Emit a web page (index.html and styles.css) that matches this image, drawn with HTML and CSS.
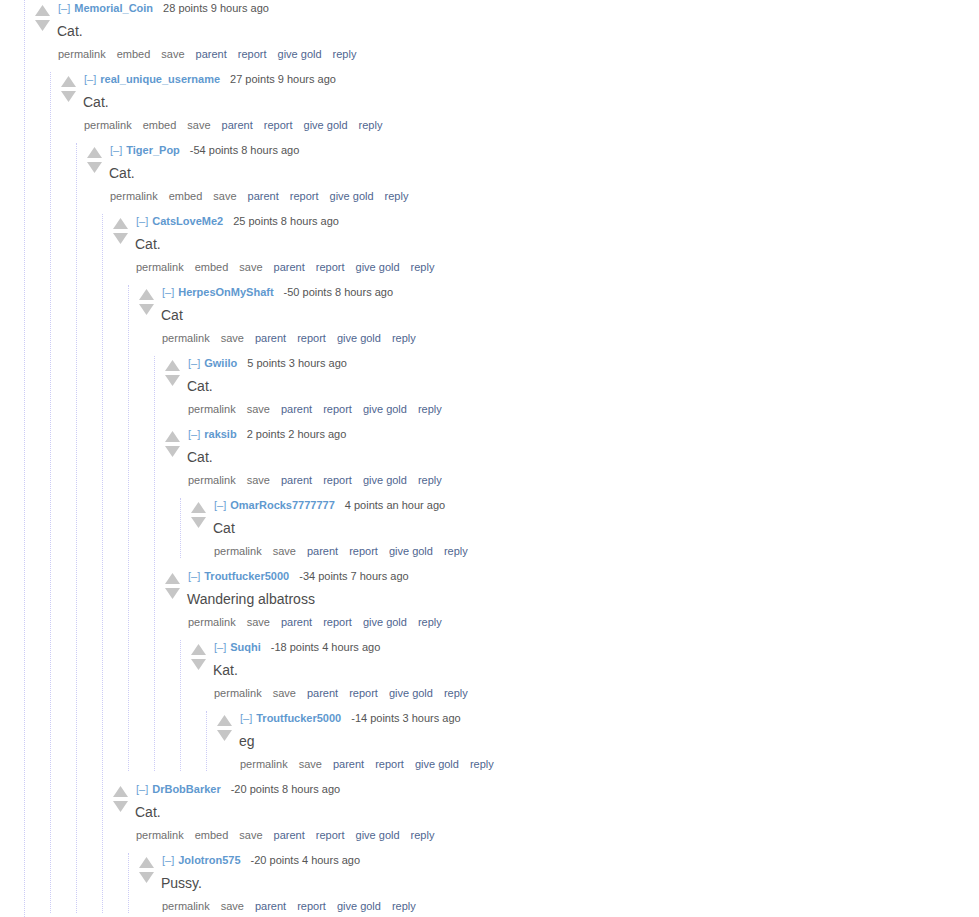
FILE: index.html
```html
<!DOCTYPE html>
<html lang="en">
<head>
<meta charset="utf-8">
<title>comments</title>
<link rel="stylesheet" href="styles.css">
</head>
<body>
<div class="thread">

  <div class="comment">
    <div class="row">
      <div class="midcol">
        <svg class="arrow up" width="15" height="11" viewBox="0 0 15 11"><polygon points="7.5,0 15,11 0,11"/></svg>
        <svg class="arrow down" width="15" height="11" viewBox="0 0 15 11"><polygon points="0,0 15,0 7.5,11"/></svg>
      </div>
      <div class="entry">
        <p class="tagline"><a class="expand">[–]</a><a class="author">Memorial_Coin</a><span class="score">28 points 9 hours ago</span></p>
        <div class="md">Cat.</div>
        <ul class="buttons"><li>permalink</li><li>embed</li><li>save</li><li class="blue">parent</li><li class="blue">report</li><li class="blue">give gold</li><li class="blue">reply</li></ul>
      </div>
    </div>
    <div class="children">

      <div class="comment">
        <div class="row">
          <div class="midcol">
            <svg class="arrow up" width="15" height="11" viewBox="0 0 15 11"><polygon points="7.5,0 15,11 0,11"/></svg>
            <svg class="arrow down" width="15" height="11" viewBox="0 0 15 11"><polygon points="0,0 15,0 7.5,11"/></svg>
          </div>
          <div class="entry">
            <p class="tagline"><a class="expand">[–]</a><a class="author">real_unique_username</a><span class="score">27 points 9 hours ago</span></p>
            <div class="md">Cat.</div>
            <ul class="buttons"><li>permalink</li><li>embed</li><li>save</li><li class="blue">parent</li><li class="blue">report</li><li class="blue">give gold</li><li class="blue">reply</li></ul>
          </div>
        </div>
        <div class="children">

          <div class="comment">
            <div class="row">
              <div class="midcol">
                <svg class="arrow up" width="15" height="11" viewBox="0 0 15 11"><polygon points="7.5,0 15,11 0,11"/></svg>
                <svg class="arrow down" width="15" height="11" viewBox="0 0 15 11"><polygon points="0,0 15,0 7.5,11"/></svg>
              </div>
              <div class="entry">
                <p class="tagline"><a class="expand">[–]</a><a class="author">Tiger_Pop</a><span class="score">-54 points 8 hours ago</span></p>
                <div class="md">Cat.</div>
                <ul class="buttons"><li>permalink</li><li>embed</li><li>save</li><li class="blue">parent</li><li class="blue">report</li><li class="blue">give gold</li><li class="blue">reply</li></ul>
              </div>
            </div>
            <div class="children">

              <div class="comment">
                <div class="row">
                  <div class="midcol">
                    <svg class="arrow up" width="15" height="11" viewBox="0 0 15 11"><polygon points="7.5,0 15,11 0,11"/></svg>
                    <svg class="arrow down" width="15" height="11" viewBox="0 0 15 11"><polygon points="0,0 15,0 7.5,11"/></svg>
                  </div>
                  <div class="entry">
                    <p class="tagline"><a class="expand">[–]</a><a class="author">CatsLoveMe2</a><span class="score">25 points 8 hours ago</span></p>
                    <div class="md">Cat.</div>
                    <ul class="buttons"><li>permalink</li><li>embed</li><li>save</li><li class="blue">parent</li><li class="blue">report</li><li class="blue">give gold</li><li class="blue">reply</li></ul>
                  </div>
                </div>
                <div class="children">

                  <div class="comment">
                    <div class="row">
                      <div class="midcol">
                        <svg class="arrow up" width="15" height="11" viewBox="0 0 15 11"><polygon points="7.5,0 15,11 0,11"/></svg>
                        <svg class="arrow down" width="15" height="11" viewBox="0 0 15 11"><polygon points="0,0 15,0 7.5,11"/></svg>
                      </div>
                      <div class="entry">
                        <p class="tagline"><a class="expand">[–]</a><a class="author">HerpesOnMyShaft</a><span class="score">-50 points 8 hours ago</span></p>
                        <div class="md">Cat</div>
                        <ul class="buttons"><li>permalink</li><li>save</li><li class="blue">parent</li><li class="blue">report</li><li class="blue">give gold</li><li class="blue">reply</li></ul>
                      </div>
                    </div>
                    <div class="children">

                      <div class="comment">
                        <div class="row">
                          <div class="midcol">
                            <svg class="arrow up" width="15" height="11" viewBox="0 0 15 11"><polygon points="7.5,0 15,11 0,11"/></svg>
                            <svg class="arrow down" width="15" height="11" viewBox="0 0 15 11"><polygon points="0,0 15,0 7.5,11"/></svg>
                          </div>
                          <div class="entry">
                            <p class="tagline"><a class="expand">[–]</a><a class="author">Gwiilo</a><span class="score">5 points 3 hours ago</span></p>
                            <div class="md">Cat.</div>
                            <ul class="buttons"><li>permalink</li><li>save</li><li class="blue">parent</li><li class="blue">report</li><li class="blue">give gold</li><li class="blue">reply</li></ul>
                          </div>
                        </div>
                      </div>

                      <div class="comment">
                        <div class="row">
                          <div class="midcol">
                            <svg class="arrow up" width="15" height="11" viewBox="0 0 15 11"><polygon points="7.5,0 15,11 0,11"/></svg>
                            <svg class="arrow down" width="15" height="11" viewBox="0 0 15 11"><polygon points="0,0 15,0 7.5,11"/></svg>
                          </div>
                          <div class="entry">
                            <p class="tagline"><a class="expand">[–]</a><a class="author">raksib</a><span class="score">2 points 2 hours ago</span></p>
                            <div class="md">Cat.</div>
                            <ul class="buttons"><li>permalink</li><li>save</li><li class="blue">parent</li><li class="blue">report</li><li class="blue">give gold</li><li class="blue">reply</li></ul>
                          </div>
                        </div>
                        <div class="children">
                          <div class="comment">
                            <div class="row">
                              <div class="midcol">
                                <svg class="arrow up" width="15" height="11" viewBox="0 0 15 11"><polygon points="7.5,0 15,11 0,11"/></svg>
                                <svg class="arrow down" width="15" height="11" viewBox="0 0 15 11"><polygon points="0,0 15,0 7.5,11"/></svg>
                              </div>
                              <div class="entry">
                                <p class="tagline"><a class="expand">[–]</a><a class="author">OmarRocks7777777</a><span class="score">4 points an hour ago</span></p>
                                <div class="md">Cat</div>
                                <ul class="buttons"><li>permalink</li><li>save</li><li class="blue">parent</li><li class="blue">report</li><li class="blue">give gold</li><li class="blue">reply</li></ul>
                              </div>
                            </div>
                          </div>
                        </div>
                      </div>

                      <div class="comment">
                        <div class="row">
                          <div class="midcol">
                            <svg class="arrow up" width="15" height="11" viewBox="0 0 15 11"><polygon points="7.5,0 15,11 0,11"/></svg>
                            <svg class="arrow down" width="15" height="11" viewBox="0 0 15 11"><polygon points="0,0 15,0 7.5,11"/></svg>
                          </div>
                          <div class="entry">
                            <p class="tagline"><a class="expand">[–]</a><a class="author">Troutfucker5000</a><span class="score">-34 points 7 hours ago</span></p>
                            <div class="md">Wandering albatross</div>
                            <ul class="buttons"><li>permalink</li><li>save</li><li class="blue">parent</li><li class="blue">report</li><li class="blue">give gold</li><li class="blue">reply</li></ul>
                          </div>
                        </div>
                        <div class="children">
                          <div class="comment">
                            <div class="row">
                              <div class="midcol">
                                <svg class="arrow up" width="15" height="11" viewBox="0 0 15 11"><polygon points="7.5,0 15,11 0,11"/></svg>
                                <svg class="arrow down" width="15" height="11" viewBox="0 0 15 11"><polygon points="0,0 15,0 7.5,11"/></svg>
                              </div>
                              <div class="entry">
                                <p class="tagline"><a class="expand">[–]</a><a class="author">Suqhi</a><span class="score">-18 points 4 hours ago</span></p>
                                <div class="md">Kat.</div>
                                <ul class="buttons"><li>permalink</li><li>save</li><li class="blue">parent</li><li class="blue">report</li><li class="blue">give gold</li><li class="blue">reply</li></ul>
                              </div>
                            </div>
                            <div class="children">
                              <div class="comment">
                                <div class="row">
                                  <div class="midcol">
                                    <svg class="arrow up" width="15" height="11" viewBox="0 0 15 11"><polygon points="7.5,0 15,11 0,11"/></svg>
                                    <svg class="arrow down" width="15" height="11" viewBox="0 0 15 11"><polygon points="0,0 15,0 7.5,11"/></svg>
                                  </div>
                                  <div class="entry">
                                    <p class="tagline"><a class="expand">[–]</a><a class="author">Troutfucker5000</a><span class="score">-14 points 3 hours ago</span></p>
                                    <div class="md">eg</div>
                                    <ul class="buttons"><li>permalink</li><li>save</li><li class="blue">parent</li><li class="blue">report</li><li class="blue">give gold</li><li class="blue">reply</li></ul>
                                  </div>
                                </div>
                              </div>
                            </div>
                          </div>
                        </div>
                      </div>

                    </div>
                  </div>

                </div>
              </div>

              <div class="comment">
                <div class="row">
                  <div class="midcol">
                    <svg class="arrow up" width="15" height="11" viewBox="0 0 15 11"><polygon points="7.5,0 15,11 0,11"/></svg>
                    <svg class="arrow down" width="15" height="11" viewBox="0 0 15 11"><polygon points="0,0 15,0 7.5,11"/></svg>
                  </div>
                  <div class="entry">
                    <p class="tagline"><a class="expand">[–]</a><a class="author">DrBobBarker</a><span class="score">-20 points 8 hours ago</span></p>
                    <div class="md">Cat.</div>
                    <ul class="buttons"><li>permalink</li><li>embed</li><li>save</li><li class="blue">parent</li><li class="blue">report</li><li class="blue">give gold</li><li class="blue">reply</li></ul>
                  </div>
                </div>
                <div class="children">
                  <div class="comment">
                    <div class="row">
                      <div class="midcol">
                        <svg class="arrow up" width="15" height="11" viewBox="0 0 15 11"><polygon points="7.5,0 15,11 0,11"/></svg>
                        <svg class="arrow down" width="15" height="11" viewBox="0 0 15 11"><polygon points="0,0 15,0 7.5,11"/></svg>
                      </div>
                      <div class="entry">
                        <p class="tagline"><a class="expand">[–]</a><a class="author">Jolotron575</a><span class="score">-20 points 4 hours ago</span></p>
                        <div class="md">Pussy.</div>
                        <ul class="buttons"><li>permalink</li><li>save</li><li class="blue">parent</li><li class="blue">report</li><li class="blue">give gold</li><li class="blue">reply</li></ul>
                      </div>
                    </div>
                  </div>
                </div>
              </div>

            </div>
          </div>

        </div>
      </div>

    </div>
  </div>

</div>
</body>
</html>
```

FILE: styles.css
```css
html, body {
  margin: 0;
  padding: 0;
  background: #ffffff;
}

body {
  font-family: "Liberation Sans", Arial, sans-serif;
  overflow: hidden;
  height: 917px;
}

.thread {
  margin-left: 24px;
  border-left: 1px dotted #ccccf5;
  padding: 1px 0 40px 10px;
  display: flex;
  flex-direction: column;
  gap: 11px;
}

.comment {
  display: flex;
  flex-direction: column;
  gap: 11px;
}

.children {
  margin-left: 15px;
  border-left: 1px dotted #ccccf5;
  padding-left: 10px;
  display: flex;
  flex-direction: column;
  gap: 11px;
}

.row {
  display: flex;
  height: 60px;
}

.midcol {
  width: 15px;
  flex: none;
  display: flex;
  flex-direction: column;
  padding-top: 4px;
  gap: 4px;
}

.arrow {
  display: block;
  fill: #c6c6c6;
}

.entry {
  margin-left: 8px;
  display: flex;
  flex-direction: column;
}

.tagline {
  margin: 0;
  font-size: 11px;
  line-height: 14px;
  height: 14px;
  color: #555555;
  display: flex;
  white-space: nowrap;
}

.expand {
  color: #6a9fd4;
  margin-right: 4px;
}

.author {
  color: #5f99cf;
  font-weight: bold;
  margin-right: 10px;
}

.md {
  margin: 6px 0 0 -1px;
  font-size: 14px;
  line-height: 20px;
  height: 20px;
  color: #4c4c4c;
}

.buttons {
  list-style: none;
  margin: 6px 0 0;
  padding: 0;
  display: flex;
  gap: 11px;
  font-size: 11px;
  line-height: 14px;
  color: #6f6f6f;
  white-space: nowrap;
}

.buttons .blue {
  color: #4f6690;
}
```
